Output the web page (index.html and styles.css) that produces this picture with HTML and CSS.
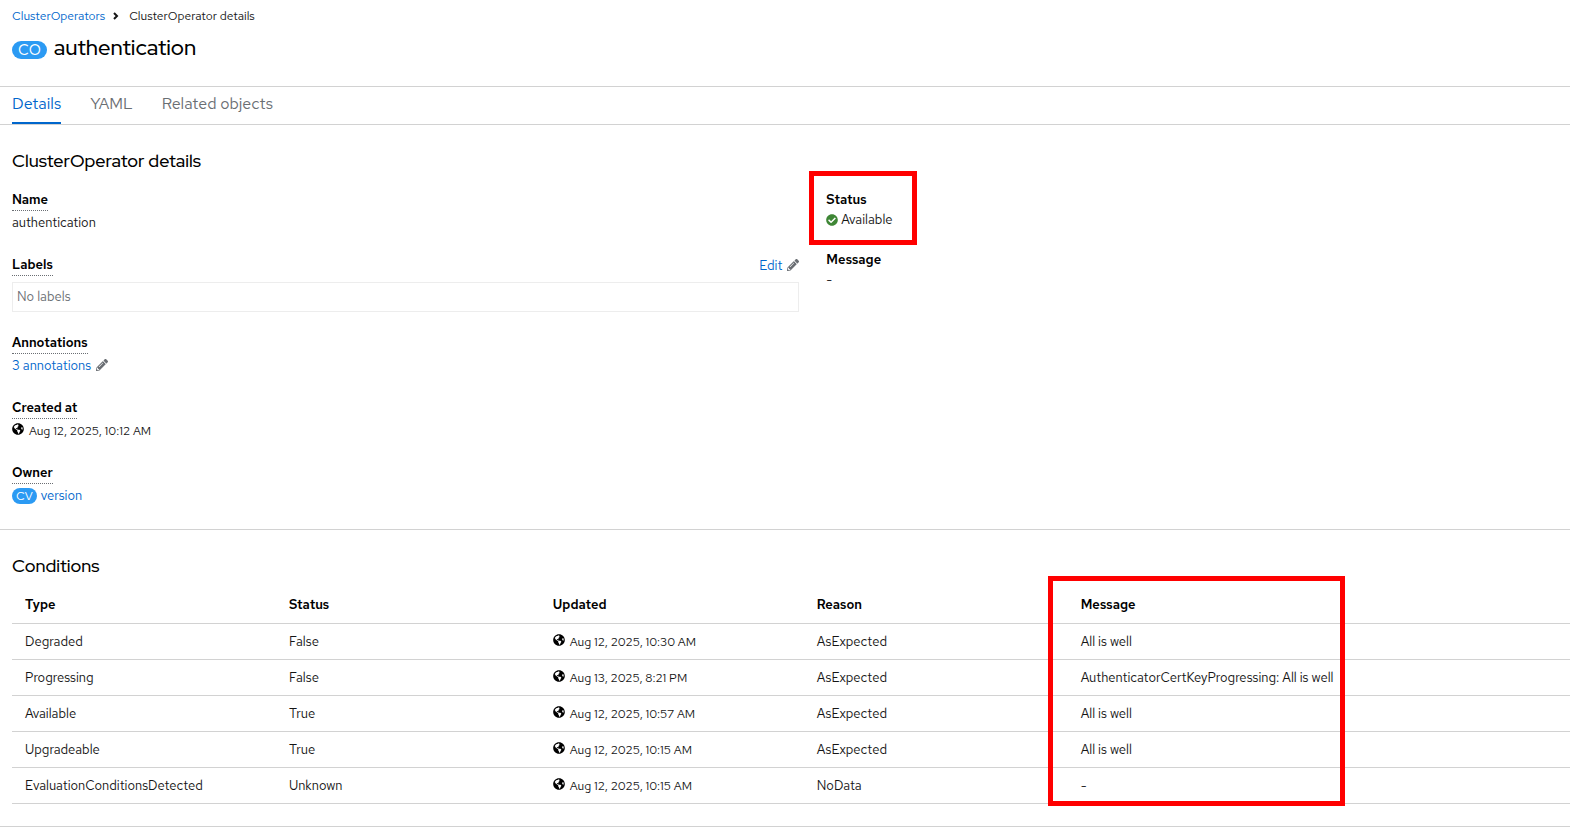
FILE: index.html
```html
<!DOCTYPE html>
<html lang="en">
<head>
<meta charset="utf-8">
<title>authentication · ClusterOperator details</title>
<link rel="stylesheet" href="styles.css">
</head>
<body>
<svg class="sprite" aria-hidden="true">
  <symbol id="globe" viewBox="0 0 496 512"><path d="M248 8C111 8 0 119 0 256s111 248 248 248 248-111 248-248S385 8 248 8zm82.300 357.600c-3.900 3.900-8 8-11.300 11.300-3 3-5.100 6.700-6.200 10.700-1.500 5.700-2.700 11.400-4.800 16.900l-17.300 46.700c-13.700 3-28 4.700-42.700 4.700v-27.400c1.700-12.600-7.600-36.300-22.600-51.300-6-6-9.400-14.100-9.400-22.600v-32c0-11.600-6.300-22.300-16.500-28-14.400-8-34.800-19.100-48.800-26.100-11.500-5.800-22.100-13.100-31.700-21.800l-.8-.7a114.800 114.800 0 0 1-18.100-20.700c-9.400-13.800-24.700-36.400-34.600-51.100 20.500-45.500 57.400-82 103.200-101.900l24 12C203.400 89.700 216 81.900 216 70.100v-11.300c8-1.300 16.100-2.100 24.400-2.400l28.300 28.300c6.200 6.200 6.200 16.400 0 22.600L264 112l-10.300 10.300c-3.100 3.100-3.100 8.200 0 11.300l4.700 4.700c3.100 3.100 3.100 8.200 0 11.300l-8 8a8 8 0 0 1-5.700 2.300h-9c-2.100 0-4.100.8-5.600 2.300l-9.900 9.700a8 8 0 0 0-1.600 9.300l15.600 31.200c2.700 5.300-1.200 11.600-7.200 11.600h-5.600c-1.900 0-3.800-.7-5.200-2l-9.300-8.100a16 16 0 0 0-15.600-3.100l-31.200 10.400a12 12 0 0 0-8.200 11.300c0 4.500 2.500 8.700 6.600 10.700l11.100 5.500c9.400 4.700 19.800 7.200 30.300 7.200s22.600 27.300 32 32h66.800c8.500 0 16.600 3.400 22.600 9.400l13.700 13.700a30.600 30.600 0 0 1 8.900 21.600 46.500 46.500 0 0 1-13.700 33zM417 274.200c-5.800-1.400-10.800-5-14.200-10l-18-27a24 24 0 0 1 0-26.600l19.600-29.400c2.300-3.500 5.500-6.300 9.200-8.200l13-6.500C440.200 193.600 448 223.900 448 256c0 8.700-.7 17.200-1.800 25.500L417 274.200z"/></symbol>
  <symbol id="pencil" viewBox="0 0 512 512"><path d="M497.900 142.100l-46.100 46.100c-4.700 4.700-12.300 4.700-17 0l-111-111c-4.700-4.700-4.700-12.300 0-17l46.100-46.100c18.700-18.700 49.100-18.700 67.900 0l60.100 60.100c18.800 18.700 18.800 49.100 0 67.900zM284.200 99.800L21.600 362.400.4 483.900c-2.900 16.400 11.400 30.600 27.800 27.800l121.500-21.300 262.600-262.600c4.700-4.700 4.700-12.300 0-17l-111-111c-4.800-4.700-12.400-4.700-17.100 0zM124.100 339.900c-5.500-5.500-5.500-14.300 0-19.800l154-154c5.500-5.500 14.300-5.500 19.800 0s5.500 14.300 0 19.800l-154 154c-5.500 5.500-14.300 5.500-19.800 0zM88 424h48v36.300l-64.500 11.300-31.100-31.100L51.700 376H88v48z"/></symbol>
  <symbol id="check" viewBox="0 0 512 512"><path d="M504 256c0 137-111 248-248 248S8 393 8 256 119 8 256 8s248 111 248 248zM227.300 387.300l184-184c6.200-6.200 6.200-16.400 0-22.600l-22.600-22.600c-6.200-6.200-16.400-6.200-22.600 0L216 308.100l-70.100-70.100c-6.200-6.200-16.400-6.200-22.600 0l-22.600 22.600c-6.200 6.200-6.200 16.400 0 22.600l104 104c6.200 6.300 16.400 6.300 22.600.1z"/></symbol>
</svg>

<header class="page-header">
  <nav class="breadcrumb" aria-label="Breadcrumb">
    <a href="#">ClusterOperators</a>
    <svg class="chevron" viewBox="0 0 6 8" aria-hidden="true"><path d="M1 1l3 3-3 3"/></svg>
    <span>ClusterOperator details</span>
  </nav>
  <h1 class="page-title"><span class="badge badge-large">CO</span>authentication</h1>
</header>

<nav class="tabs" aria-label="Sections">
  <a class="tab tab-active" href="#" aria-current="page">Details</a>
  <a class="tab" href="#">YAML</a>
  <a class="tab" href="#">Related objects</a>
</nav>

<main>
  <section class="pane">
    <h2 class="section-title">ClusterOperator details</h2>
    <div class="columns">
      <dl class="details">
        <div class="field">
          <dt><button class="term" type="button">Name</button></dt>
          <dd>authentication</dd>
        </div>
        <div class="field">
          <dt class="term-row"><button class="term" type="button">Labels</button><button class="link edit" type="button">Edit <svg class="pencil"><use href="#pencil"/></svg></button></dt>
          <dd class="label-box">No labels</dd>
        </div>
        <div class="field">
          <dt><button class="term" type="button">Annotations</button></dt>
          <dd><button class="link" type="button">3 annotations <svg class="pencil"><use href="#pencil"/></svg></button></dd>
        </div>
        <div class="field">
          <dt><button class="term" type="button">Created at</button></dt>
          <dd class="time"><svg class="globe"><use href="#globe"/></svg>Aug 12, 2025, 10:12 AM</dd>
        </div>
        <div class="field">
          <dt><button class="term" type="button">Owner</button></dt>
          <dd class="owner"><span class="badge">CV</span><a href="#">version</a></dd>
        </div>
      </dl>
      <dl class="summary">
        <div class="summary-field highlighted">
          <dt>Status</dt>
          <dd class="status"><svg class="check"><use href="#check"/></svg>Available</dd>
        </div>
        <div class="summary-field">
          <dt>Message</dt>
          <dd>-</dd>
        </div>
      </dl>
    </div>
  </section>

  <section class="pane">
    <h2 class="section-title">Conditions</h2>
    <div class="table-wrap">
      <table class="table">
        <thead>
          <tr><th scope="col">Type</th><th scope="col">Status</th><th scope="col">Updated</th><th scope="col">Reason</th><th class="message" scope="col">Message</th></tr>
        </thead>
        <tbody>
          <tr><td>Degraded</td><td>False</td><td><span class="time"><svg class="globe"><use href="#globe"/></svg>Aug 12, 2025, 10:30 AM</span></td><td>AsExpected</td><td>All is well</td></tr>
          <tr><td>Progressing</td><td>False</td><td><span class="time"><svg class="globe"><use href="#globe"/></svg>Aug 13, 2025, 8:21 PM</span></td><td>AsExpected</td><td>AuthenticatorCertKeyProgressing: All is well</td></tr>
          <tr><td>Available</td><td>True</td><td><span class="time"><svg class="globe"><use href="#globe"/></svg>Aug 12, 2025, 10:57 AM</span></td><td>AsExpected</td><td>All is well</td></tr>
          <tr><td>Upgradeable</td><td>True</td><td><span class="time"><svg class="globe"><use href="#globe"/></svg>Aug 12, 2025, 10:15 AM</span></td><td>AsExpected</td><td>All is well</td></tr>
          <tr><td>EvaluationConditionsDetected</td><td>Unknown</td><td><span class="time"><svg class="globe"><use href="#globe"/></svg>Aug 12, 2025, 10:15 AM</span></td><td>NoData</td><td>-</td></tr>
        </tbody>
      </table>
      <div class="column-highlight" aria-hidden="true"></div>
    </div>
  </section>
</main>
</body>
</html>
```

FILE: styles.css
```css
* { box-sizing: border-box; }

body {
  margin: 0;
  background: #fff;
  color: #151515;
  font: 13px/18px "Red Hat Text", "Open Sans", sans-serif;
}

h1, h2, dl, dd { margin: 0; }
a { color: #06c; text-decoration: none; }
button {
  padding: 0;
  border: 0;
  background: none;
  color: inherit;
  font: inherit;
  cursor: pointer;
}
.sprite { display: none; }

.page-header {
  padding: 7px 12px 23px;
  border-bottom: 1px solid #d2d2d2;
}
.breadcrumb {
  display: flex;
  align-items: center;
  gap: 8px;
  font-size: 12px;
}
.chevron {
  width: 6px;
  height: 8px;
  margin-right: 2px;
  fill: none;
  stroke: #151515;
  stroke-width: 2;
}
.page-title {
  display: flex;
  align-items: center;
  gap: 7px;
  margin-top: 8px;
  color: #000;
  font: 500 22px/30px "Red Hat Display", Lato, sans-serif;
}
.badge {
  padding: 0 4px;
  border-radius: 20px;
  background: #2b9af3;
  color: #fff;
  font: 12px/16px "Red Hat Text", "Open Sans", sans-serif;
}
.badge-large {
  margin-top: 4px;
  padding: 0 6px;
  font-size: 15px;
  line-height: 18px;
}

.tabs {
  display: flex;
  gap: 29px;
  padding: 0 12px;
  border-bottom: 1px solid #d2d2d2;
}
.tab {
  padding: 5px 0 6px;
  border-bottom: 2px solid transparent;
  color: #6a6e73;
  font-size: 16px;
  line-height: 24px;
}
.tab-active {
  border-color: #06c;
  color: #06c;
}

.pane { padding: 24px 0 22px 12px; border-bottom: 1px solid #d2d2d2; }
.section-title {
  color: #000;
  font: 500 18px/24px "Red Hat Display", "Open Sans", sans-serif;
}
.columns {
  display: grid;
  grid-template-columns: 36fr 34fr;
  gap: 27px;
}
.details {
  display: grid;
  gap: 21px;
  padding-top: 17px;
}
dt, th { color: #000; font-weight: 600; }
.term {
  border-bottom: 1px dotted #6a6e73;
  line-height: 20px;
}
.field dt { height: 21px; }
.field dd { padding: 3px 0 2px; }
.term-row { display: flex; justify-content: space-between; }
.link { color: #06c; font-weight: 400; }
.pencil {
  width: 12px;
  height: 12px;
  margin-left: 2px;
  fill: #6a6e73;
  vertical-align: -1px;
}
.field .label-box {
  margin-top: 6px;
  padding: 5px 4px;
  border: 1px solid #ededed;
  color: #6a6e73;
}
.time, .owner, .status { display: flex; align-items: center; }
.time { font-size: 12px; }
.globe {
  width: 12px;
  height: 12px;
  margin: 0 5px 4px 0;
  fill: #000;
}
.owner { gap: 4px; }

.summary {
  display: grid;
  align-content: start;
  gap: 20px;
  padding-top: 17px;
}
.summary-field { line-height: 20px; }
.status { gap: 3px; }
.check { width: 12px; height: 12px; fill: #3e8635; }
.highlighted { position: relative; justify-self: start; }
.highlighted::after {
  content: "";
  position: absolute;
  inset: -19px -24px -15px -17px;
  border: 5px solid #f00;
}

.table-wrap { position: relative; margin-top: 9px; }
.table {
  width: 100%;
  border-collapse: collapse;
  table-layout: fixed;
}
th, td {
  width: 16.94%;
  padding: 9px 13px 8px;
  border-bottom: 1px solid #d2d2d2;
  text-align: left;
}
th { padding-bottom: 9px; }
.message { width: auto; }
.column-highlight {
  position: absolute;
  top: -11px;
  bottom: -2px;
  left: 1036px;
  width: 297px;
  border: 5px solid #f00;
}
```
